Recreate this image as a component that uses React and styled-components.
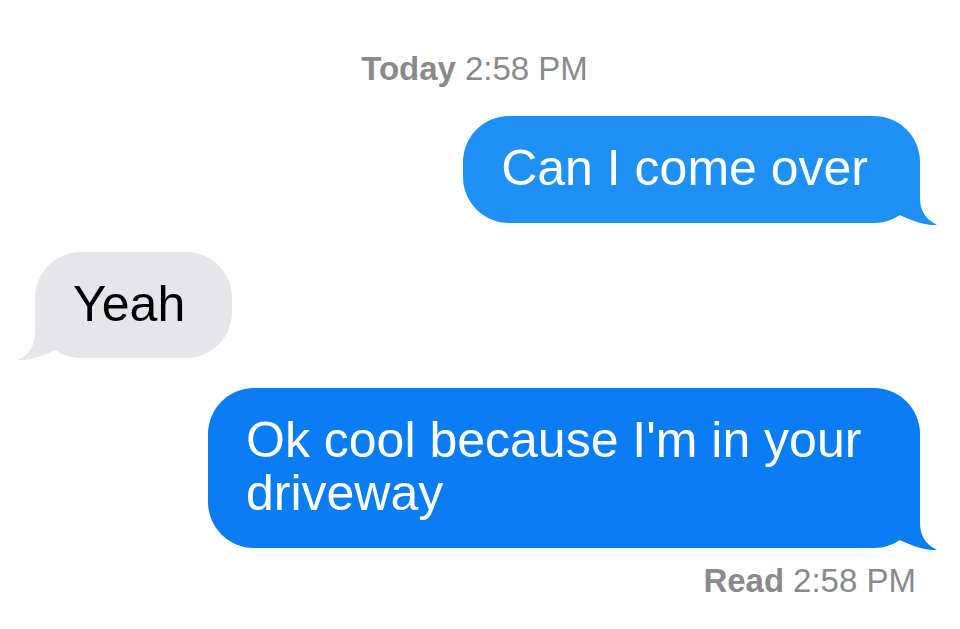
import React from 'react'
import styled, { createGlobalStyle, css } from 'styled-components'

const GlobalStyle = createGlobalStyle`
  html, body {
    margin: 0;
    padding: 0;
    background: #ffffff;
  }
  body {
    font-family: "Liberation Sans", Arial, Helvetica, sans-serif;
    -webkit-font-smoothing: antialiased;
  }
`

const Thread = styled.div`
  width: 960px;
  height: 629px;
  box-sizing: border-box;
  padding: 50px 40px 0 35px;
  display: flex;
  flex-direction: column;
  background: #ffffff;
  overflow: hidden;
`

const Stamp = styled.div`
  font-size: 33px;
  line-height: 38px;
  color: #8a8a8e;
  display: flex;
  justify-content: ${p => (p.align === 'right' ? 'flex-end' : 'center')};
  padding-right: ${p => (p.align === 'right' ? '4px' : '6px')};
  margin-top: ${p => p.top || 0}px;
  & > b {
    font-weight: 700;
    margin-right: 9px;
  }
`

const Row = styled.div`
  display: flex;
  justify-content: ${p => (p.from === 'me' ? 'flex-end' : 'flex-start')};
  margin-top: ${p => p.top}px;
`

const tones = {
  light: '#1f90f6',
  deep: '#0a7df5',
  gray: '#e5e5ea'
}

const Bubble = styled.div`
  position: relative;
  box-sizing: border-box;
  max-width: 712px;
  border-radius: 46px;
  font-size: 50px;
  line-height: 53px;
  background: ${p => tones[p.tone]};
  color: ${p => (p.tone === 'gray' ? '#000000' : '#ffffff')};
  ${p => p.from === 'me'
    ? css`padding: 26px 52px 28px 38px;`
    : css`padding: 26px 47px 27px 38px;`}
`

const TailSvg = styled.svg`
  position: absolute;
  bottom: -3px;
  width: 52px;
  height: 52px;
  ${p => p.from === 'me'
    ? css`right: -19px;`
    : css`
        left: -19px;
        transform: scaleX(-1);
      `}
`

const Tail = ({ from, color }) => (
  <TailSvg from={from} viewBox="0 0 52 52">
    <path
      d="M33 0 L33 24 C33 36 38 45 50 51 C41 51.5 30 49 10 40 L0 40 L0 0 Z"
      fill={color}
    />
  </TailSvg>
)

const Message = ({ from, tone, top, children }) => (
  <Row from={from} top={top}>
    <Bubble from={from} tone={tone}>
      {children}
      <Tail from={from} color={tones[tone]} />
    </Bubble>
  </Row>
)

export default function App() {
  return (
    <>
      <GlobalStyle />
      <Thread>
        <Stamp>
          <b>Today</b>2:58 PM
        </Stamp>
        <Message from="me" tone="light" top={28}>
          Can I come over
        </Message>
        <Message from="them" tone="gray" top={29}>
          Yeah
        </Message>
        <Message from="me" tone="deep" top={30}>
          Ok cool because I'm in your driveway
        </Message>
        <Stamp align="right" top={14}>
          <b>Read</b>2:58 PM
        </Stamp>
      </Thread>
    </>
  )
}
